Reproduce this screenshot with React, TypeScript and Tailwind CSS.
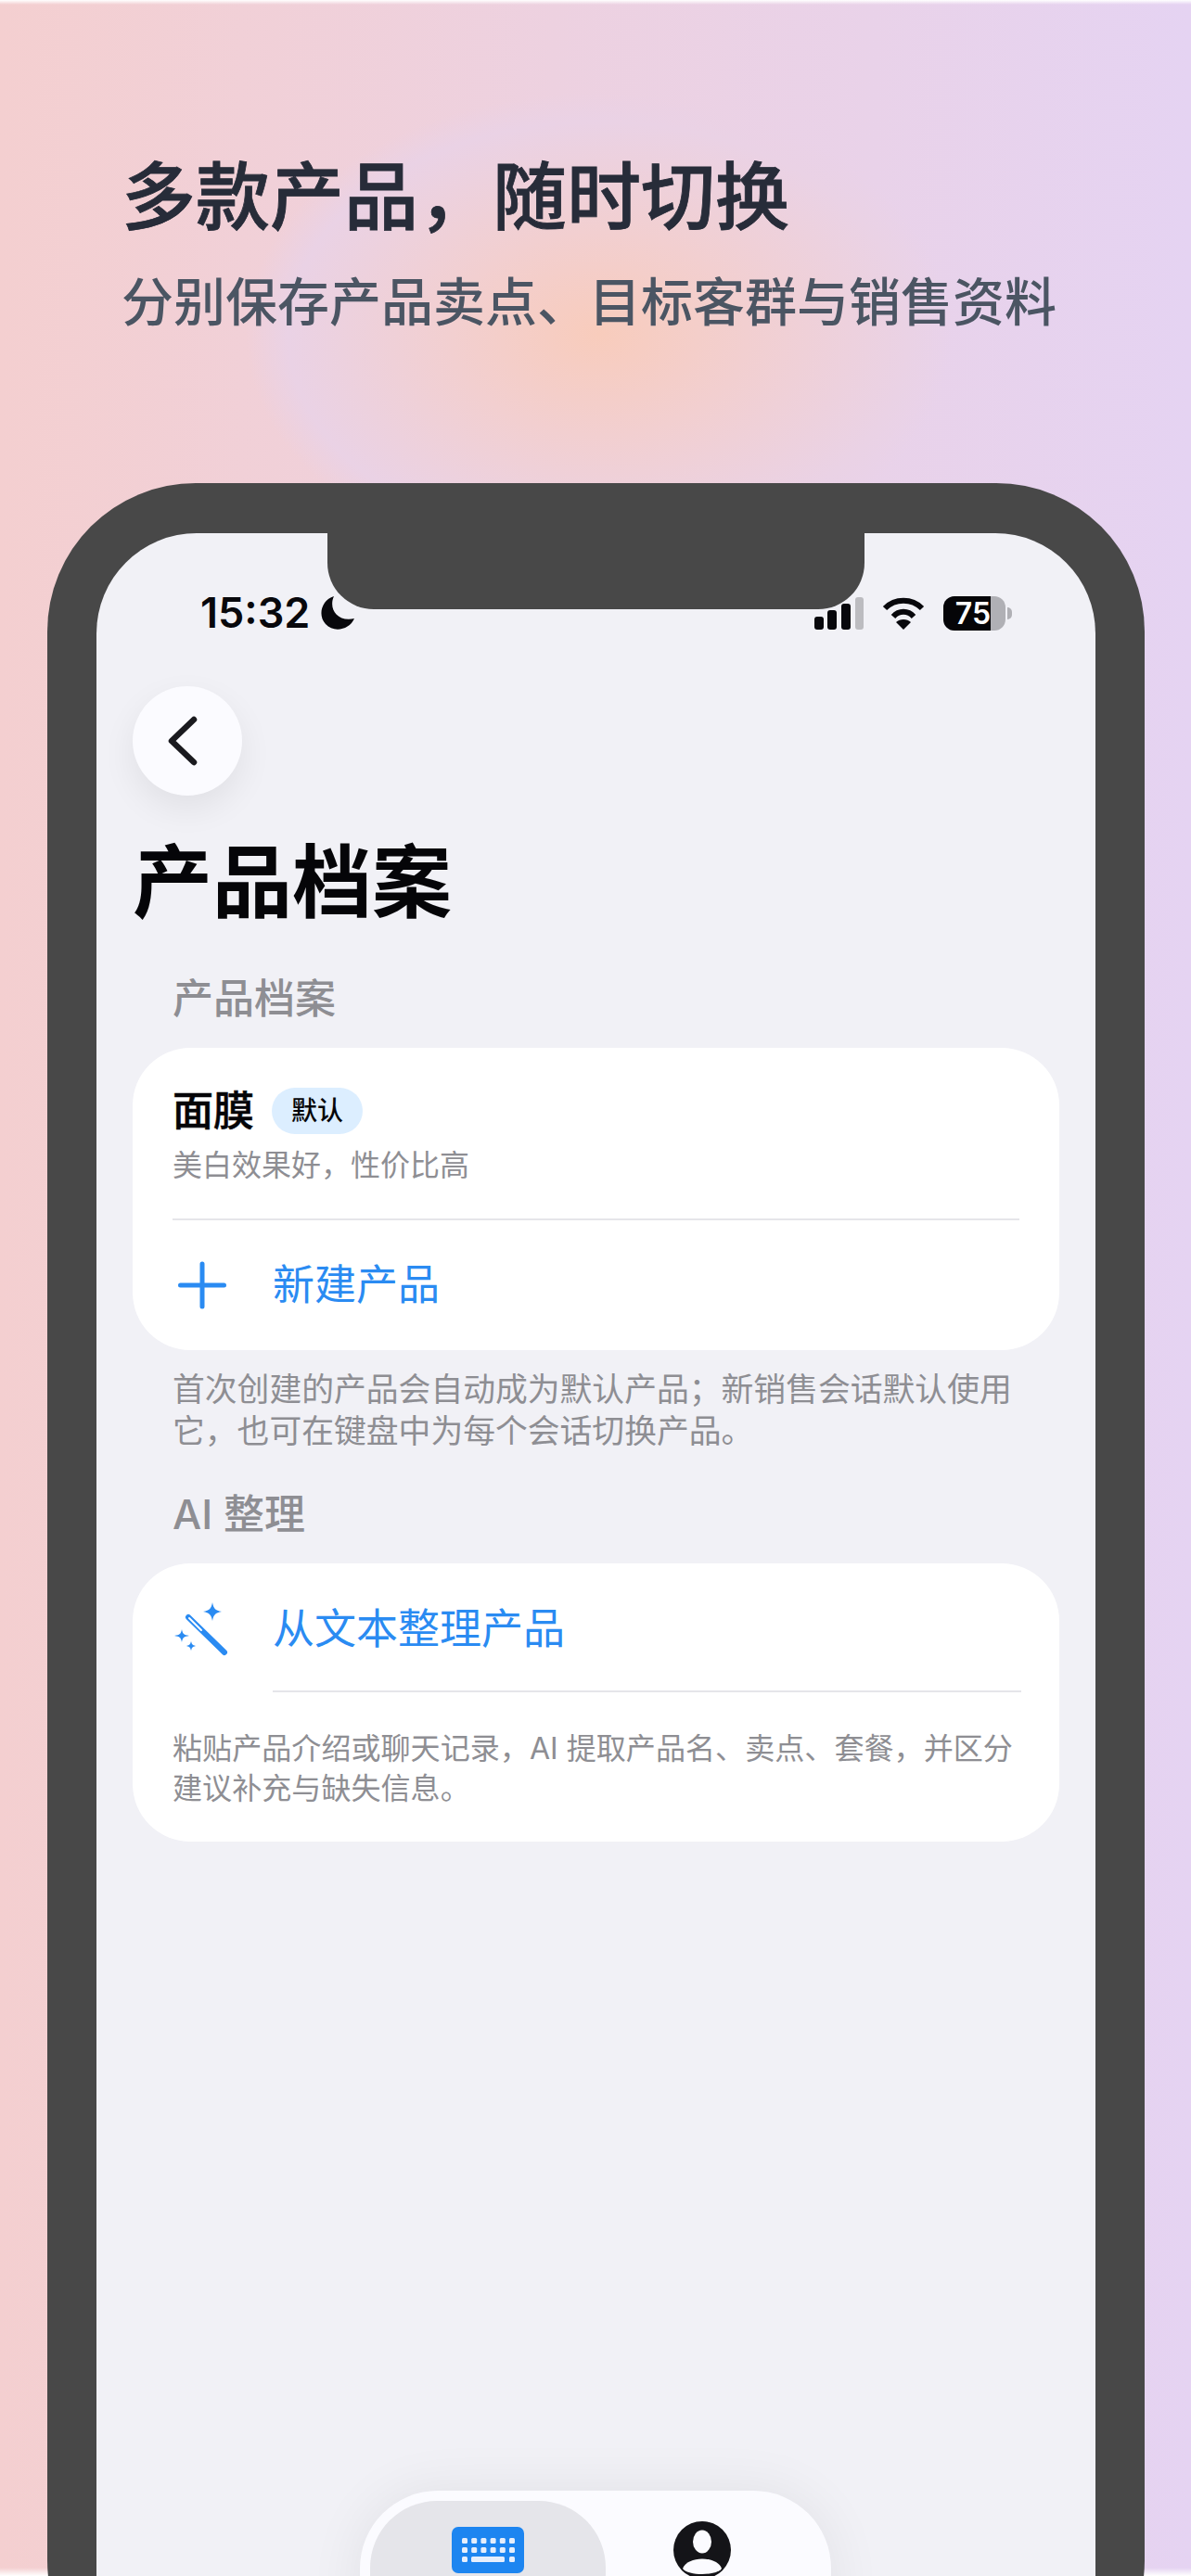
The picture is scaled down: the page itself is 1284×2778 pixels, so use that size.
import React from 'react';

const cjk = "font-['Inter','Noto_Sans_CJK_SC',sans-serif]";

const Keyboard = () => (
  <svg width="78" height="50" viewBox="0 0 78 50">
    <rect width="78" height="50" rx="7" fill="#1d85f0" />
    {[0, 1, 2, 3, 4, 5].map((i) => (
      <g key={i} fill="#e6eefb">
        <rect x={11 + i * 10.2} y="12" width="6" height="6" rx="1.5" />
        <rect x={11 + i * 10.2} y="22" width="6" height="6" rx="1.5" />
      </g>
    ))}
    <rect x="11" y="32" width="6" height="6" rx="1.5" fill="#e6eefb" />
    <rect x="21" y="32" width="36" height="6" rx="1.5" fill="#e6eefb" />
    <rect x="62" y="32" width="6" height="6" rx="1.5" fill="#e6eefb" />
  </svg>
);

const Wand = () => (
  <svg width="58" height="58" viewBox="0 0 58 58" fill="#2a8bf2">
    <path d="M41 0 C42 6 44 9 51 10 C44 11 42 14 41 20 C40 14 38 11 31 10 C38 9 40 6 41 0Z" />
    <path d="M8 29 C9 34 10 35 16 36 C10 37 9 38 8 43 C7 38 6 37 0 36 C6 35 7 34 8 29Z" />
    <path d="M18 42 C19 45 19 46 23 47 C19 48 19 49 18 52 C17 49 17 48 13 47 C17 46 17 45 18 42Z" />
    <path d="M15 16 L54 54" stroke="#2a8bf2" strokeWidth="6" strokeLinecap="round" />
    <path d="M16 17 L29 30" stroke="#ffffff" strokeWidth="2" strokeLinecap="round" />
  </svg>
);

const StatusIcons = () => (
  <div className="flex items-center">
    <svg width="54" height="35" viewBox="0 0 54 35">
      <rect x="0" y="21" width="10" height="14" rx="3" fill="#08080c" />
      <rect x="14" y="14" width="10" height="21" rx="3" fill="#08080c" />
      <rect x="29" y="7" width="10" height="28" rx="3" fill="#08080c" />
      <rect x="44" y="0" width="9" height="35" rx="3" fill="#bcbcc0" />
    </svg>
    <svg className="ml-[19px]" width="46" height="35" viewBox="0 0 46 35" fill="none" stroke="#08080c" strokeWidth="6">
      <path d="M3 12 C14 1 32 1 43 12" />
      <path d="M12 21 C18 14 28 14 34 21" />
      <path d="M23 35 L15 27 C19 23 27 23 31 27 Z" fill="#08080c" stroke="none" />
    </svg>
    <div className="ml-[20px] flex items-center">
      <div className="w-[67px] h-[37px] rounded-[12px] overflow-hidden flex bg-[#b0b0b5]">
        <div className="w-[51px] bg-[#050508] text-white text-[32px] leading-[37px] font-semibold text-right font-['Inter',sans-serif]">75</div>
      </div>
      <div className="ml-[2px] w-[5px] h-[13px] rounded-r-full bg-[#b0b0b5]" />
    </div>
  </div>
);

export default function App() {
  return (
    <div className={`relative w-[1284px] h-[2778px] overflow-hidden bg-gradient-to-r from-[#f4cfd0] to-[#e5d3f2] ${cjk}`}>
      {/* glow behind the heading */}
      <div className="absolute left-[265px] top-[100px] w-[760px] h-[520px] rounded-full bg-[radial-gradient(closest-side,#f8ccbc_0%,#f2cfd0_42%,#ead2e5_88%,rgba(234,210,229,0)_100%)]" />
      <div className="absolute inset-x-0 top-0 h-[5px] bg-gradient-to-b from-white to-transparent" />
      <div className="absolute inset-x-0 bottom-0 h-[9px] bg-gradient-to-t from-white to-transparent" />

      <div className="relative flex flex-col">
        <header className="pl-[131px] pt-[165px] h-[521px]">
          <h1 className="text-[80px] leading-[94px] font-medium [-webkit-text-stroke:0.8px_#272c39] text-[#272c39]">多款产品，随时切换</h1>
          <p className="mt-[34px] text-[56px] leading-[66px] font-medium text-[#4b5563]">分别保存产品卖点、目标客群与销售资料</p>
        </header>

        <div className="relative ml-[51px] w-[1183px] h-[2400px] rounded-[160px] border-x-[53px] border-t-[54px] border-[#484848] bg-[#484848]">
          <div className="relative h-full rounded-[108px] bg-[#f1f1f6] overflow-hidden">
            <div className="absolute left-[249px] top-0 w-[579px] h-[82px] rounded-b-[50px] bg-[#484848]" />

            <div className="flex items-center justify-between pl-[112px] pr-[90px] pt-[67px]">
              <div className="flex items-center">
                <span className="text-[45px] leading-[38px] font-semibold text-[#08080c] font-['Inter',sans-serif]">15:32</span>
                <svg className="ml-[11px]" width="38" height="38" viewBox="0 0 38 38">
                  <path d="M15 1 C9 14 18 29 37 25 C32 37 15 41 6 31 C-3 21 2 5 15 1Z" fill="#08080c" />
                </svg>
              </div>
              <StatusIcons />
            </div>

            <div className="pl-[39px] pr-[39px] pt-[60px]">
              <button className="w-[118px] h-[118px] rounded-full bg-[#fbfbff] flex items-center justify-center shadow-[0_14px_36px_rgba(0,0,0,0.07)]">
                <svg className="-ml-[10px]" width="32" height="54" viewBox="0 0 32 54" fill="none" stroke="#1a1a1f" strokeWidth="6.5" strokeLinecap="round" strokeLinejoin="round">
                  <path d="M28 4 L4 27 L28 50" />
                </svg>
              </button>

              <h2 className="mt-[42px] text-[86px] leading-[104px] font-bold text-[#050508]">产品档案</h2>
              <div className="mt-[47px] pl-[43px] text-[44px] leading-[52px] font-medium text-[#8e8e93]">产品档案</div>

              <section className="mt-[27px] rounded-[62px] bg-white pt-[41px]">
                <div className="pl-[43px] flex items-center">
                  <span className="text-[44px] leading-[54px] font-medium [-webkit-text-stroke:0.6px_#050508] text-[#050508]">面膜</span>
                  <span className="ml-[19px] w-[98px] h-[50px] rounded-full bg-[#dceeff] flex items-center justify-center text-[28px] font-medium text-[#050508]">默认</span>
                </div>
                <p className="mt-[12px] pl-[43px] text-[32px] leading-[40px] text-[#8e8e93]">美白效果好，性价比高</p>
                <div className="mt-[37px] ml-[43px] mr-[43px] h-[2px] bg-[#e5e5ea]" />
                <div className="h-[140px] pl-[38px] flex items-center">
                  <svg width="74" height="74" viewBox="0 0 74 74" fill="none" stroke="#2a8bf2" strokeWidth="5" strokeLinecap="round">
                    <path d="M13.5 37 H60.5 M37 14 V60" />
                  </svg>
                  <span className="ml-[39px] text-[45px] text-[#2a8bf2]">新建产品</span>
                </div>
              </section>

              <p className="mt-[20px] px-[43px] text-[34.8px] leading-[45px] text-[#8e8e93]">首次创建的产品会自动成为默认产品；新销售会话默认使用它，也可在键盘中为每个会话切换产品。</p>

              <div className="mt-[41px] pl-[43px] text-[44px] leading-[52px] font-medium text-[#8e8e93]">AI 整理</div>

              <section className="mt-[27px] rounded-[62px] bg-white">
                <div className="h-[137px] pl-[45px] pt-[4px] flex items-center">
                  <Wand />
                  <span className="ml-[48px] text-[45px] text-[#2a8bf2]">从文本整理产品</span>
                </div>
                <div className="ml-[151px] mr-[41px] h-[2px] bg-[#e5e5ea]" />
                <p className="pt-[39px] pb-[36px] pl-[43px] pr-[30px] text-[32.1px] leading-[43px] text-[#8e8e93]">粘贴产品介绍或聊天记录，AI 提取产品名、卖点、套餐，并区分建议补充与缺失信息。</p>
              </section>
            </div>

            {/* floating tab bar */}
            <nav className="absolute left-[284px] top-[2111px] w-[508px] h-[200px] rounded-[84px] bg-[#fbfbff] shadow-[0_0_60px_rgba(0,0,0,0.07)] flex p-[11px]">
              <div className="w-[254px] h-[170px] rounded-[72px] bg-[#e5e5ea] flex justify-center pt-[28px]">
                <div className="h-[50px]"><Keyboard /></div>
              </div>
              <div className="flex-1 flex justify-center pt-[21px]">
                <svg width="64" height="64" viewBox="0 0 64 64" className="-ml-[24px]">
                  <circle cx="32" cy="32" r="31" fill="#141418" />
                  <ellipse cx="32" cy="23" rx="10" ry="12.5" fill="#fbfbff" />
                  <path d="M11 52 C16 38 48 38 53 52 C47 60 17 60 11 52Z" fill="#fbfbff" />
                </svg>
              </div>
            </nav>
          </div>
        </div>
      </div>
    </div>
  );
}
